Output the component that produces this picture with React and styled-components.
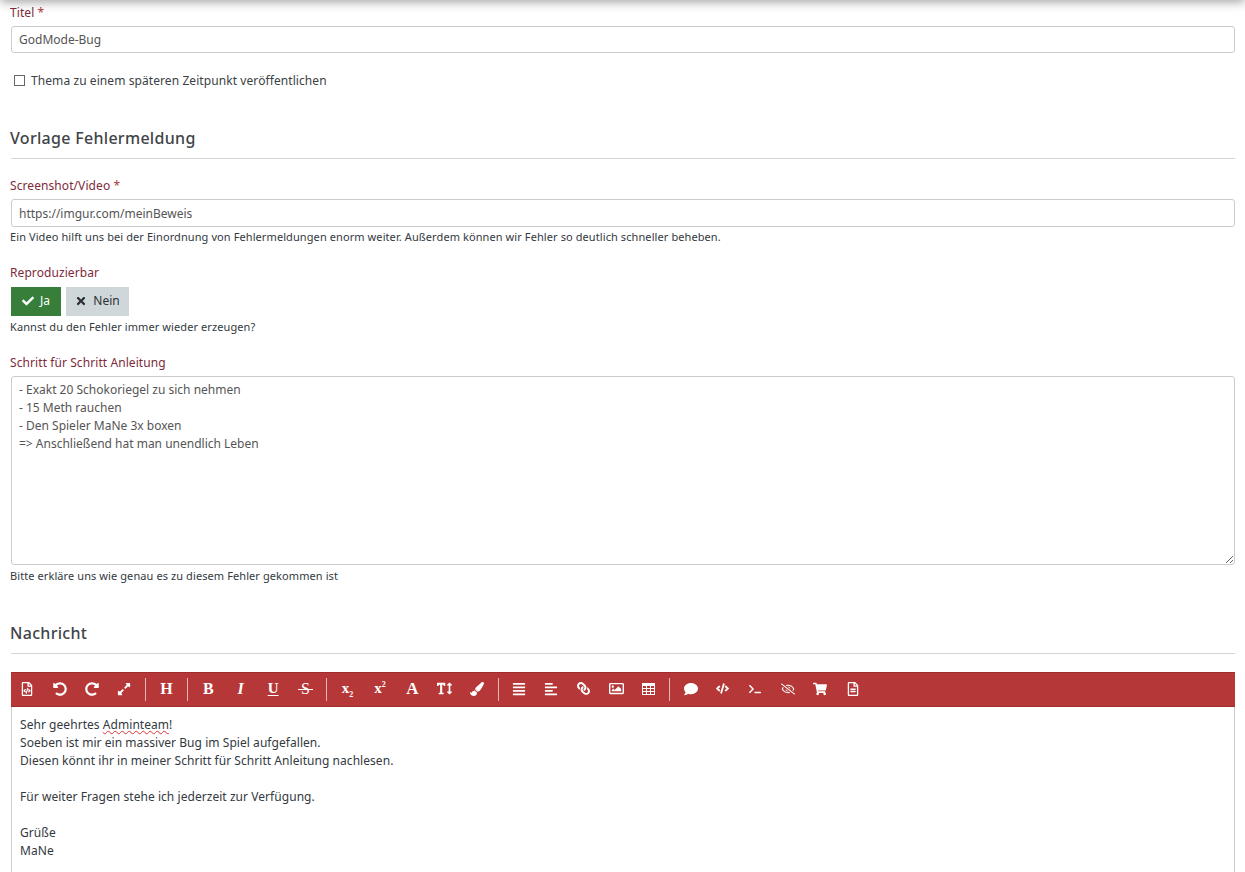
import React from 'react';
import styled, { createGlobalStyle } from 'styled-components';
import {
  FaAlignJustify,
  FaAlignLeft,
  FaCheck,
  FaCode,
  FaComment,
  FaExpandAlt,
  FaLink,
  FaPaintBrush,
  FaRedoAlt,
  FaRegEyeSlash,
  FaRegFileAlt,
  FaRegFileCode,
  FaRegImage,
  FaShoppingCart,
  FaTerminal,
  FaTextHeight,
  FaTimes,
  FaUndoAlt
} from 'react-icons/fa';

const GlobalStyle = createGlobalStyle`
  html, body {
    margin: 0;
    height: 872px;
    overflow: hidden;
    background: #fff;
  }
  body {
    font-family: 'Noto Sans', sans-serif;
    font-size: 12px;
    color: #3a3f44;
  }
`;

const TopShadow = styled.div`
  position: fixed;
  top: -10px;
  left: 0;
  right: 0;
  height: 10px;
  box-shadow: 0 1px 11px rgba(0, 0, 0, 0.45);
`;

const Page = styled.main`
  padding: 5px 10px 0 11px;
`;

const Label = styled.label`
  display: block;
  margin-left: -1px;
  font-size: 12px;
  line-height: 16px;
  letter-spacing: 0.08px;
  color: #7d2b3a;

  span {
    color: #b53737;
  }
`;

const TextInput = styled.input`
  display: block;
  box-sizing: border-box;
  width: 100%;
  height: ${(p) => p.$height}px;
  margin-top: ${(p) => p.$top}px;
  padding: 0 7px;
  border: 1px solid #ccc;
  border-radius: 3px;
  background: #fff;
  font: 12px 'Noto Sans', sans-serif;
  color: #555;
  outline: none;
`;

const CheckRow = styled.label`
  display: flex;
  align-items: center;
  gap: 6px;
  height: 16px;
  margin: 19px 0 0 3px;
  font-size: 12px;
  letter-spacing: 0.08px;
`;

const CheckBox = styled.input`
  appearance: none;
  box-sizing: border-box;
  width: 11px;
  height: 11px;
  margin: 0;
  border: 1px solid #666;
  background: #fff;
`;

const SectionTitle = styled.h2`
  margin: ${(p) => p.$top}px 0 0 -1px;
  font-size: 16px;
  font-weight: 500;
  line-height: 24px;
  letter-spacing: 0.3px;
  color: #3f4448;
`;

const Rule = styled.hr`
  height: 1px;
  margin: 8px 0 0;
  border: 0;
  background: #d4d4d4;
`;

const Help = styled.div`
  margin: ${(p) => p.$top}px 0 0 -1px;
  font-size: 11px;
  line-height: 16px;
  letter-spacing: 0.09px;
  color: #33393e;
`;

const Field = styled.div`
  margin-top: ${(p) => p.$top}px;
`;

const ToggleRow = styled.div`
  display: flex;
  gap: 5px;
  margin-top: 6px;
`;

const Toggle = styled.button`
  display: flex;
  align-items: center;
  justify-content: center;
  gap: 6px;
  width: ${(p) => p.$width}px;
  height: 29px;
  padding: 0 0 2px;
  border: 0;
  background: ${(p) => (p.$active ? '#367e39' : '#d0d7da')};
  color: ${(p) => (p.$active ? '#fff' : '#2c3136')};
  font: 12px 'Noto Sans', sans-serif;

  svg {
    font-size: 12px;
  }
`;

const TextArea = styled.textarea`
  display: block;
  box-sizing: border-box;
  width: 100%;
  height: 189px;
  margin-top: 5px;
  padding: 4px 7px;
  border: 1px solid #ccc;
  border-radius: 3px;
  font: 12px/18px 'Noto Sans', sans-serif;
  color: #555;
  outline: none;
`;

const Toolbar = styled.div`
  display: flex;
  align-items: center;
  box-sizing: border-box;
  height: 35px;
  margin-top: 18px;
  padding-bottom: 2px;
  border-top: 1px solid #a02c2c;
  border-bottom: 1px solid #a02c2c;
  background: #b53737;
  color: #fff;
`;

const ToolButton = styled.span`
  display: flex;
  align-items: center;
  justify-content: center;
  flex: none;
  width: 32.4px;
  height: 100%;
  font-size: ${(p) => p.$size || 13}px;

  svg {
    transform: ${(p) => (p.$flip ? 'scaleX(-1)' : 'none')};
  }
`;

const Glyph = styled(ToolButton)`
  font-family: 'Liberation Serif', serif;
  font-weight: 700;
  font-style: ${(p) => (p.$italic ? 'italic' : 'normal')};

  sub, sup {
    font-size: 8px;
    line-height: 0;
  }
`;

const Underlined = styled.span`
  text-decoration: underline;
  text-underline-offset: 2px;
`;

const Struck = styled.span`
  position: relative;
  font-weight: 400;

  &::after {
    content: '';
    position: absolute;
    left: -3px;
    right: -3px;
    top: 9px;
    height: 1px;
    background: #fff;
  }
`;

const Separator = styled.span`
  flex: none;
  width: 1px;
  height: 23px;
  margin: 2px 4.3px 0;
  background: #e3b7b7;
`;

const Editor = styled.div`
  box-sizing: border-box;
  height: 180px;
  padding: 9px 8px;
  border-left: 1px solid #ccc;
  border-right: 1px solid #ccc;
  font-size: 12px;
  line-height: 18px;
  letter-spacing: 0.05px;
  color: #33393e;
`;

const Misspelled = styled.span`
  text-decoration: underline wavy #d33;
  text-decoration-thickness: 1px;
`;

const EditorLine = styled.div`
  min-height: 18px;
`;

const TableIcon = () => (
  <svg width='13' height='12' viewBox='0 0 13 12' fill='currentColor'>
    <path
      fillRule='evenodd'
      d='M0 0h13v12H0zM1 3v2h3V3zm4 0v2h3V3zm4 0v2h3V3zM1 6v2h3V6zm4 0v2h3V6zm4 0v2h3V6zM1 9v2h3V9zm4 0v2h3V9zm4 0v2h3V9z'
    />
  </svg>
);

const App = () => {
  return (
    <>
      <GlobalStyle />
      <TopShadow />
      <Page>
        <Label>
          Titel <span>*</span>
        </Label>
        <TextInput $height={27} $top={5} defaultValue='GodMode-Bug' />
        <CheckRow>
          <CheckBox type='checkbox' />
          Thema zu einem späteren Zeitpunkt veröffentlichen
        </CheckRow>

        <SectionTitle $top={38}>Vorlage Fehlermeldung</SectionTitle>
        <Rule />

        <Field $top={19}>
          <Label>
            Screenshot/Video <span>*</span>
          </Label>
          <TextInput $height={28} $top={5} defaultValue='https://imgur.com/meinBeweis' />
          <Help $top={2}>
            Ein Video hilft uns bei der Einordnung von Fehlermeldungen enorm weiter. Außerdem können wir Fehler so deutlich schneller beheben.
          </Help>
        </Field>

        <Field $top={20}>
          <Label>Reproduzierbar</Label>
          <ToggleRow>
            <Toggle $active $width={50}>
              <FaCheck /> Ja
            </Toggle>
            <Toggle $width={63}>
              <FaTimes /> Nein
            </Toggle>
          </ToggleRow>
          <Help $top={3}>Kannst du den Fehler immer wieder erzeugen?</Help>
        </Field>

        <Field $top={20}>
          <Label>Schritt für Schritt Anleitung</Label>
          <TextArea
            defaultValue={
              '- Exakt 20 Schokoriegel zu sich nehmen\n- 15 Meth rauchen\n- Den Spieler MaNe 3x boxen\n=> Anschließend hat man unendlich Leben'
            }
          />
          <Help $top={3}>Bitte erkläre uns wie genau es zu diesem Fehler gekommen ist</Help>
        </Field>

        <SectionTitle $top={37}>Nachricht</SectionTitle>
        <Rule />

        <Toolbar>
          <ToolButton $size={14}><FaRegFileCode /></ToolButton>
          <ToolButton $size={14}><FaUndoAlt /></ToolButton>
          <ToolButton $size={14}><FaRedoAlt /></ToolButton>
          <ToolButton $size={14}><FaExpandAlt /></ToolButton>
          <Separator />
          <Glyph $size={16}>H</Glyph>
          <Separator />
          <Glyph $size={16}>B</Glyph>
          <Glyph $size={16} $italic>I</Glyph>
          <Glyph $size={15}><Underlined>U</Underlined></Glyph>
          <Glyph $size={16}><Struck>S</Struck></Glyph>
          <Separator />
          <Glyph $size={15}><span>x<sub>2</sub></span></Glyph>
          <Glyph $size={15}><span>x<sup>2</sup></span></Glyph>
          <Glyph $size={17}>A</Glyph>
          <ToolButton $size={15}><FaTextHeight /></ToolButton>
          <ToolButton $size={14}><FaPaintBrush /></ToolButton>
          <Separator />
          <ToolButton $size={14}><FaAlignJustify /></ToolButton>
          <ToolButton $size={14}><FaAlignLeft /></ToolButton>
          <ToolButton $flip><FaLink /></ToolButton>
          <ToolButton $size={15}><FaRegImage /></ToolButton>
          <ToolButton><TableIcon /></ToolButton>
          <Separator />
          <ToolButton $size={14}><FaComment /></ToolButton>
          <ToolButton><FaCode /></ToolButton>
          <ToolButton $size={12}><FaTerminal /></ToolButton>
          <ToolButton $size={14}><FaRegEyeSlash /></ToolButton>
          <ToolButton $size={14}><FaShoppingCart /></ToolButton>
          <ToolButton $size={14}><FaRegFileAlt /></ToolButton>
        </Toolbar>
        <Editor>
          <EditorLine>Sehr geehrtes <Misspelled>Adminteam</Misspelled>!</EditorLine>
          <EditorLine>Soeben ist mir ein massiver Bug im Spiel aufgefallen.</EditorLine>
          <EditorLine>Diesen könnt ihr in meiner Schritt für Schritt Anleitung nachlesen.</EditorLine>
          <EditorLine />
          <EditorLine>Für weiter Fragen stehe ich jederzeit zur Verfügung.</EditorLine>
          <EditorLine />
          <EditorLine>Grüße</EditorLine>
          <EditorLine>MaNe</EditorLine>
        </Editor>
      </Page>
    </>
  );
};

export default App;
